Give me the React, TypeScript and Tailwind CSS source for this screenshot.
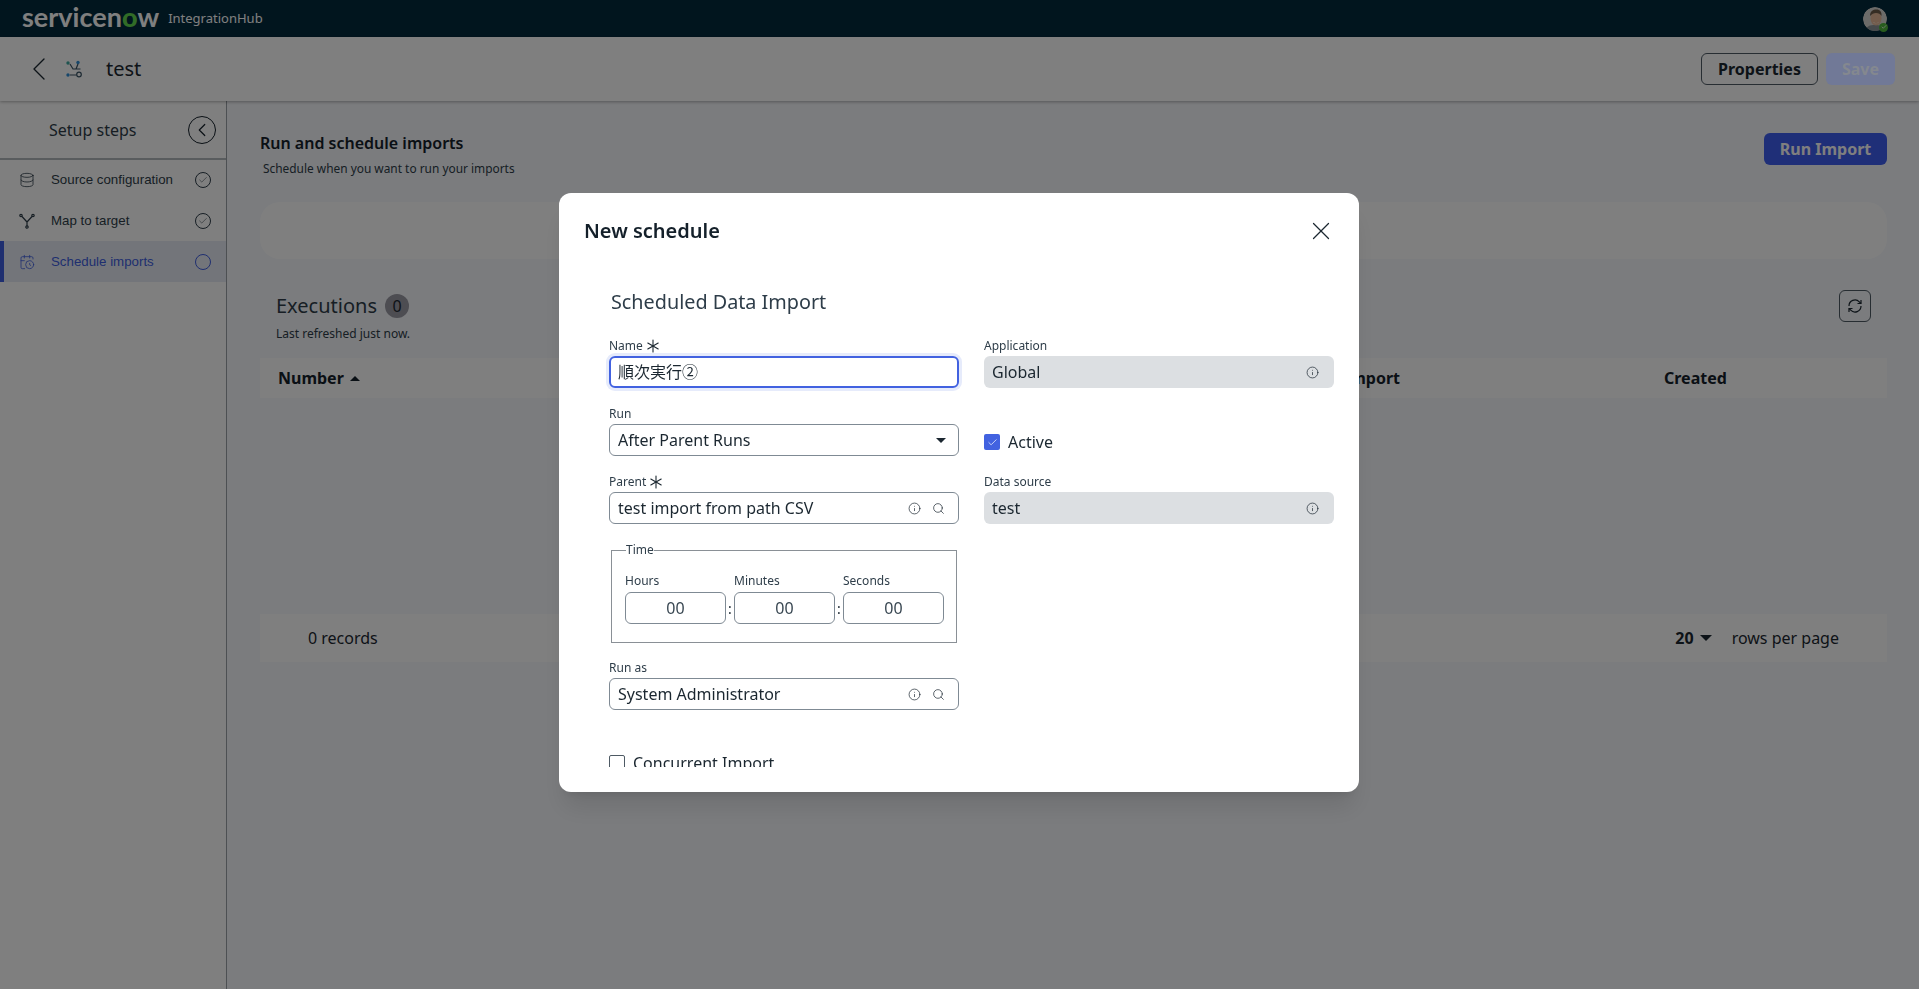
import { Asterisk, CalendarClock, Check, ChevronLeft, Database, Info, Search, X } from "lucide-react";

const SANS = "font-['Noto_Sans','Noto_Sans_CJK_JP',sans-serif]";

const STEPS = [
  { label: "Source configuration", icon: <Database size={16} strokeWidth={1.2} />, done: true },
  { label: "Map to target", icon: <MapIcon />, done: true },
  { label: "Schedule imports", icon: <CalendarClock size={16} strokeWidth={1.2} />, done: false },
];

function MapIcon() {
  return (
    <svg width="16" height="16" viewBox="0 0 16 16" fill="none" stroke="currentColor" strokeWidth="1.2">
      <circle cx="2" cy="2.5" r="1.2" />
      <circle cx="14" cy="2.5" r="1.2" />
      <circle cx="8" cy="14" r="1.2" />
      <path d="M3 3.5 8 9l5-5.500M8 9v4" />
    </svg>
  );
}

function ArrowsIcon() {
  return (
    <svg width="18" height="18" viewBox="0 0 18 18" fill="none" strokeWidth="1.2">
      <circle cx="3" cy="3" r="1.700" fill="#3fa9a0" />
      <circle cx="13" cy="2.500" r="1.700" fill="#2f8fd6" />
      <circle cx="3" cy="15" r="1.700" fill="#2f8fd6" />
      <circle cx="14" cy="14.500" r="2.300" stroke="#3b5566" />
      <path d="M5 4 8 9h7.500M5 15h6.500M13 4l-2 5" stroke="#3b5566" />
    </svg>
  );
}

function RefreshIcon() {
  return (
    <svg width="16" height="16" viewBox="0 0 16 16" fill="none" stroke="#1b2730" strokeWidth="1.2">
      <path d="M2 8a6 6 0 0 1 10.300-4.200L14 5.500M14 8a6 6 0 0 1-10.300 4.200L2 10.500" />
      <path d="M14 2v3.500h-3.500M2 14v-3.500h3.500" />
    </svg>
  );
}

function Avatar() {
  return (
    <div className="relative w-6 h-6">
      <svg width="24" height="24" viewBox="0 0 24 24" className="rounded-full">
        <circle cx="12" cy="12" r="12" fill="#d9d6d2" />
        <path d="M2 24c1-5 5-6 10-6s9 1 10 6z" fill="#8d9498" />
        <ellipse cx="13" cy="11.500" rx="5.500" ry="7" fill="#e6b998" />
        <path d="M7 9c0-5 3-6.500 6.500-6.500S19 5 18.500 9c-1-2-3-3-5.500-3S9 7 7 9z" fill="#6d5a49" />
        <path d="M10 15c2 1.500 4.500 1.500 6 0-.5 1.800-5.500 1.800-6 0z" fill="#ffffff" />
      </svg>
      <span className="absolute right-[-1px] bottom-[-1px] w-[9px] h-[9px] rounded-full bg-[#4fb83a] flex items-center justify-center text-white">
        <Check size={6} strokeWidth={3} />
      </span>
    </div>
  );
}

function Label({ text, required }: { text: string; required?: boolean }) {
  return (
    <div className="h-5 flex items-center text-[12px] text-[#2e3d49]">
      {text}
      {required && <Asterisk size={24} strokeWidth={1.1} className="-my-1 -ml-[2px] text-[#1b2730]" />}
    </div>
  );
}

function LookupField({ label, value, required }: { label: string; value: string; required?: boolean }) {
  return (
    <div className="h-[68px]">
      <Label text={label} required={required} />
      <div className="h-8 flex items-center justify-between rounded-md border border-[#7f8a94] pl-2 pr-[13px] text-[16px] text-[#1b2730]">
        {value}
        <div className="flex items-center gap-[11px] text-[#1b2730]">
          <Info size={13} strokeWidth={1.3} />
          <Search size={13} strokeWidth={1.3} />
        </div>
      </div>
    </div>
  );
}

function ReadOnlyField({ label, value }: { label: string; value: string }) {
  return (
    <div className="h-[68px]">
      <Label text={label} />
      <div className="h-8 flex items-center justify-between rounded-md bg-[#dcdfe2] pl-2 pr-[15px] text-[16px] text-[#1b2730]">
        {value}
        <Info size={13} strokeWidth={1.3} className="text-[#1b2730]" />
      </div>
    </div>
  );
}

function TimeBox({ label }: { label: string }) {
  return (
    <div className="w-[101px]">
      <div className="h-5 pb-[2px] flex items-center text-[12px] text-[#2e3d49]">{label}</div>
      <div className="h-8 flex items-center justify-center rounded-md border border-[#7f8a94] text-[16px] text-[#3a4853]">
        00
      </div>
    </div>
  );
}

function Colon() {
  return <div className="w-2 h-8 mt-5 flex items-center justify-center text-[14px] text-[#1b2730]">:</div>;
}

function Modal() {
  return (
    <div className="fixed inset-0 z-20 bg-black/50 flex justify-center pt-[193px] pr-[1px]">
      <div className={`${SANS} w-[800px] h-[599px] rounded-xl bg-white shadow-xl flex flex-col`}>
        <div className="h-[75px] flex items-center justify-between pl-[25px] pr-[23px] shrink-0">
          <h2 className="text-[20px] font-semibold text-[#14202a]">New schedule</h2>
          <X size={30} strokeWidth={1} className="text-[#1b2730]" />
        </div>
        <div className="flex-1 overflow-hidden mb-[25px] pl-[50px]">
          <h3 className="ml-[2px] mt-[17px] h-[34px] leading-[34px] text-[19.800px] text-[#2e3d49]">Scheduled Data Import</h3>
          <div className="mt-[17px] grid grid-cols-[350px_350px] gap-x-[25px]">
            <div>
              <div className="h-[68px]">
                <Label text="Name" required />
                <div className="h-8 flex items-center rounded-md border-2 border-[#4262e0] pl-[7px] text-[16px] text-[#1b2730] shadow-[0_0_0_3px_#e6ebfb]">
                  順次実行②
                </div>
              </div>
              <div className="h-[68px]">
                <Label text="Run" />
                <div className="h-8 flex items-center justify-between rounded-md border border-[#7f8a94] pl-2 pr-3 text-[16px] text-[#1b2730]">
                  After Parent Runs
                  <span className="w-0 h-0 border-x-[5px] border-x-transparent border-t-[5px] border-t-[#1b2730]" />
                </div>
              </div>
              <LookupField label="Parent" value="test import from path CSV" required />
              <fieldset className="mt-[1px] ml-[2px] w-[346px] h-[102px] border border-[#8a9096] pl-[13px]">
                <legend className="ml-[1px] px-0 text-[12px] leading-[18px] text-[#2e3d49]">Time</legend>
                <div className="flex mt-[13px]">
                  <TimeBox label="Hours" />
                  <Colon />
                  <TimeBox label="Minutes" />
                  <Colon />
                  <TimeBox label="Seconds" />
                </div>
              </fieldset>
              <div className="mt-[15px]">
                <LookupField label="Run as" value="System Administrator" />
              </div>
              <div className="mt-[25px] flex items-center gap-2 text-[16px] text-[#1b2730]">
                <span className="w-4 h-4 rounded-[2px] border border-[#4e5a64]" />
                Concurrent Import
              </div>
            </div>
            <div>
              <ReadOnlyField label="Application" value="Global" />
              <div className="h-[68px] pt-[30px] flex items-start gap-2 text-[16px] leading-4 text-[#1b2730]">
                <span className="w-4 h-4 rounded-[2px] bg-[#4262e0] flex items-center justify-center text-white">
                  <Check size={11} strokeWidth={1.5} />
                </span>
                Active
              </div>
              <ReadOnlyField label="Data source" value="test" />
            </div>
          </div>
        </div>
      </div>
    </div>
  );
}

export default function App() {
  return (
    <div className={`${SANS} h-[989px] flex flex-col bg-[#f6f8fc] overflow-hidden`}>
      <header className="h-[37px] shrink-0 bg-[#032a3d] flex items-center justify-between pl-[22px] pr-[32px]">
        <div className="flex items-center">
          <span className="font-['Lato',sans-serif] font-bold text-[27px] leading-none text-white mb-[4px]">
            servicen<span className="text-[#62d84e] font-black">o</span>w
          </span>
          <span className="ml-[9px] text-[13px] text-white">IntegrationHub</span>
        </div>
        <Avatar />
      </header>

      <div className="h-[64px] shrink-0 bg-white shadow-[0_1px_3px_rgba(0,0,0,0.3)] relative flex items-center justify-between pl-[19px] pr-[24px]">
        <div className="flex items-center text-[#1b2730]">
          <ChevronLeft size={40} strokeWidth={0.8} />
          <div className="ml-[6px]">
            <ArrowsIcon />
          </div>
          <span className="ml-[23px] text-[20px]">test</span>
        </div>
        <div className="flex items-center gap-2">
          <button className="w-[117px] h-8 rounded-md border border-[#4e5a64] text-[16px] font-bold text-[#1b2730]">
            Properties
          </button>
          <button className="relative z-30 w-[69px] h-8 rounded-md bg-[#717997] text-[16px] font-bold text-[#84888f]">
            Save
          </button>
        </div>
      </div>

      <div className="flex-1 flex min-h-0">
        <aside className="w-[227px] shrink-0 bg-white border-r border-[#9aa0a6]">
          <div className="h-[59px] flex items-center border-b-2 border-[#b3b8bd] pl-[49px] pr-[10px] justify-between">
            <span className="text-[16px] text-[#2e3d49]">Setup steps</span>
            <span className="w-7 h-7 rounded-full border-[1.5px] border-[#14202a] flex items-center justify-center text-[#14202a]">
              <ChevronLeft size={22} strokeWidth={1.3} />
            </span>
          </div>
          <div>
            {STEPS.map((s) => (
              <div
                key={s.label}
                className={
                  s.done
                    ? "h-[41px] first:h-[40px] flex items-center pl-[19px] pr-[15px] font-['Liberation_Sans',sans-serif] text-[13.300px] text-[#2e3d49]"
                    : "h-[41px] flex items-center pl-[15px] pr-[15px] border-l-4 border-[#3f5ee0] bg-[#e6ebf5] font-['Liberation_Sans',sans-serif] text-[13.300px] text-[#3f5ee0]"
                }
              >
                <span className="w-4 h-4 flex items-center justify-center shrink-0">{s.icon}</span>
                <span className="ml-[16px] flex-1">{s.label}</span>
                <span
                  className={
                    s.done
                      ? "w-4 h-4 rounded-full border border-[#2e3d49] flex items-center justify-center"
                      : "w-4 h-4 rounded-full border border-[#3f5ee0]"
                  }
                >
                  {s.done && <Check size={10} strokeWidth={1.3} />}
                </span>
              </div>
            ))}
          </div>
        </aside>

        <main className="flex-1 pt-[32px] pl-[33px] pr-[32px]">
          <div className="h-8 flex items-start justify-between">
            <div>
              <h1 className="text-[16px] leading-5 font-semibold text-[#14202a]">Run and schedule imports</h1>
              <p className="ml-[3px] mt-[7px] text-[11.900px] leading-4 text-[#2e3d49]">
                Schedule when you want to run your imports
              </p>
            </div>
            <button className="w-[123px] h-8 rounded-md bg-[#3f5ef0] text-[16px] font-bold text-white">
              Run Import
            </button>
          </div>

          <div className="mt-[37px] h-[57px] rounded-[20px] bg-white" />

          <div className="mt-[31px] h-8 flex items-center justify-between pl-[16px] pr-[16px]">
            <div className="flex items-center gap-[8px]">
              <span className="text-[20px] text-[#2e3d49]">Executions</span>
              <span className="w-6 h-6 rounded-full bg-[#9a9aa4] flex items-center justify-center text-[16px] text-[#1b2730]">
                0
              </span>
            </div>
            <button className="w-8 h-8 rounded-md border border-[#4e5a64] flex items-center justify-center">
              <RefreshIcon />
            </button>
          </div>
          <p className="pl-[16px] mt-[4px] h-4 text-[12px] leading-4 text-[#2e3d49]">Last refreshed just now.</p>

          <div className="mt-[16px] h-[40px] bg-white flex items-center pl-[18px] text-[16px] font-bold text-[#14202a]">
            <div className="w-[1066px] flex items-center gap-[6px]">
              Number
              <span className="w-0 h-0 border-x-[5px] border-x-transparent border-b-[5px] border-b-[#14202a]" />
            </div>
            <div className="w-[320px]">Import</div>
            <div>Created</div>
          </div>

          <div className="mt-[216px] h-[48px] bg-white flex items-center justify-between pl-[48px] pr-[48px] text-[16px] text-[#1b2730]">
            <span>0 records</span>
            <div className="flex items-center">
              <span className="font-bold">20</span>
              <span className="ml-[6px] w-0 h-0 border-x-[6px] border-x-transparent border-t-[6px] border-t-[#1b2730]" />
              <span className="ml-[20px]">rows per page</span>
            </div>
          </div>
        </main>
      </div>

      <Modal />
    </div>
  );
}
